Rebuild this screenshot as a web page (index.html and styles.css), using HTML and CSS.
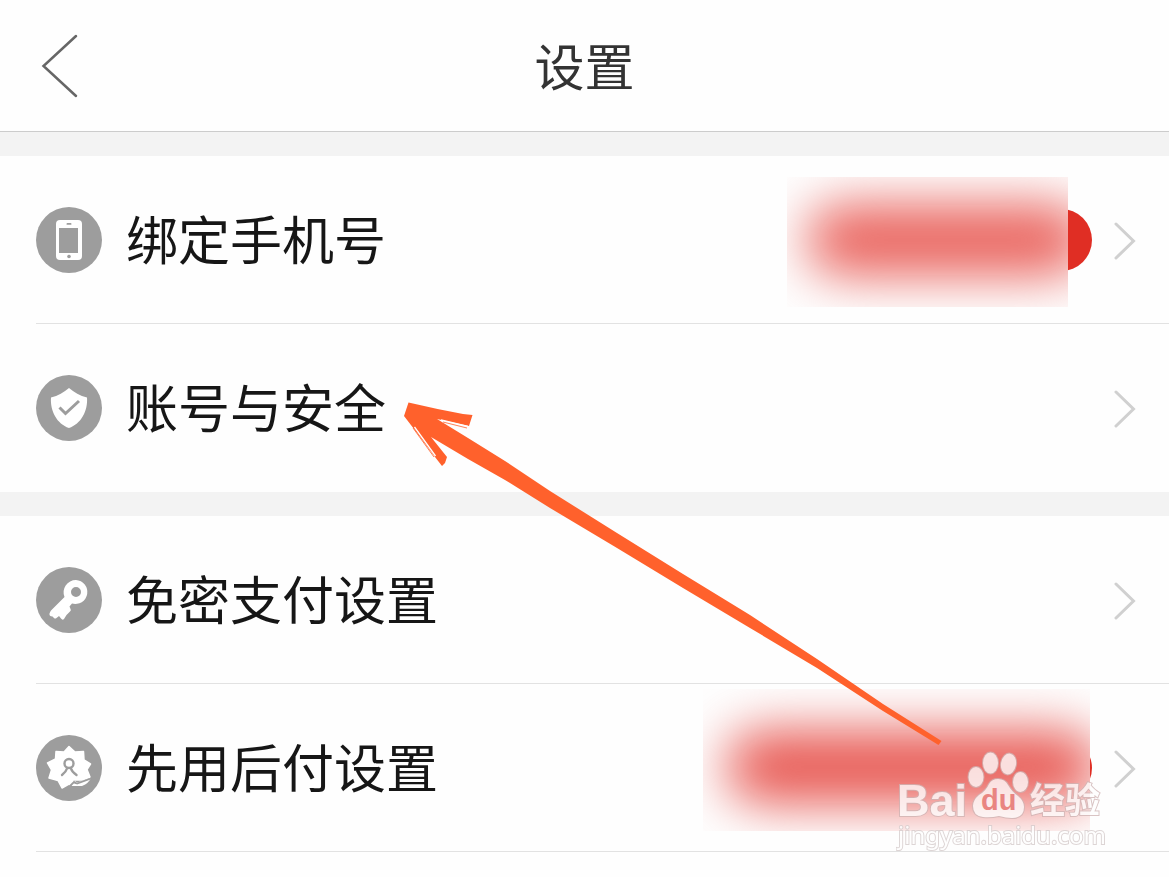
FILE: index.html
```html
<!DOCTYPE html>
<html lang="zh-CN">
<head>
    <meta charset="UTF-8">
    <meta name="viewport" content="width=device-width, initial-scale=1.0">
    <title>设置</title>
    <link rel="stylesheet" href="styles.css">
</head>
<body>
    <header class="header">
        <button class="back" aria-label="返回">
            <svg width="38" height="64" viewBox="0 0 38 64"><path d="M36 2L3.500 32L36 62" fill="none" stroke="#666" stroke-width="2.500" stroke-linecap="round"/></svg>
        </button>
        <h1 class="title">设置</h1>
    </header>

    <main>
        <nav class="group">
            <a class="row" href="#phone">
                <svg class="icon" viewBox="0 0 66 66">
                    <circle cx="33" cy="33" r="33" fill="#9d9d9d"/>
                    <rect x="20" y="13" width="26" height="40" rx="4" fill="#fff"/>
                    <rect x="23" y="21" width="19" height="25" fill="#9d9d9d"/>
                    <rect x="30.500" y="16" width="5" height="1.800" rx="0.900" fill="#9d9d9d"/>
                    <circle cx="33" cy="49.500" r="1.800" fill="#9d9d9d"/>
                </svg>
                <span class="label">绑定手机号</span>
                <span class="badge"><span class="mask"></span></span>
                <svg class="chevron" viewBox="0 0 24 40"><path d="M4 4L21.500 21L4 38"/></svg>
            </a>
            <a class="row" href="#account">
                <svg class="icon" viewBox="0 0 66 66">
                    <circle cx="33" cy="33" r="33" fill="#9d9d9d"/>
                    <path d="M33 13C38 17 44 21 51 22.500C52 36 45 49 33 53C21 49 14 36 15 22.500C22 21 28 17 33 13Z" fill="#fff"/>
                    <path d="M23.500 32.500L29.500 38.500L43 26" fill="none" stroke="#9d9d9d" stroke-width="3"/>
                </svg>
                <span class="label">账号与安全</span>
                <svg class="chevron" viewBox="0 0 24 40"><path d="M4 4L21.500 21L4 38"/></svg>
            </a>
        </nav>

        <nav class="group">
            <a class="row" href="#pay">
                <svg class="icon" viewBox="0 0 66 66">
                    <circle cx="33" cy="33" r="33" fill="#9d9d9d"/>
                    <path fill-rule="evenodd" fill="#fff" d="M40 13A12 12 0 1 1 36 36.500L33.500 39.500L34.500 42Q35.500 43 34 44.500L30.500 48L28 52Q26.500 53.500 25 51.500L23 49L20.500 51Q19 52 18 51L16.500 49.500Q13 49.500 13.500 46.500Q14 45 15 43.500L28.500 30A12.300 12.300 0 0 1 40 13ZM40 20A5 5 0 1 0 40 30A5 5 0 1 0 40 20Z"/>
                </svg>
                <span class="label">免密支付设置</span>
                <svg class="chevron" viewBox="0 0 24 40"><path d="M4 4L21.500 21L4 38"/></svg>
            </a>
            <a class="row" href="#paylater">
                <svg class="icon" viewBox="0 0 66 66">
                    <circle cx="33" cy="33" r="33" fill="#9d9d9d"/>
                    <path fill="#fff" stroke="#fff" stroke-width="1.500" stroke-linejoin="round" d="M33 11.500L39 17L47.500 16.500L48 25L54.500 29L51 34.500L54 42L46 45L37 45L35 50L33 49L26 53L22 45.500L13 43L15.500 35L11.500 28L19.500 24L20 16.500L28 17Z"/>
                    <circle cx="33" cy="28.500" r="4.500" fill="none" stroke="#9d9d9d" stroke-width="2.400"/>
                    <path d="M26 40Q30 37 31 33.500M35 33.500Q36 37 40.500 40" fill="none" stroke="#9d9d9d" stroke-width="2.400" stroke-linecap="round"/>
                    <path d="M36 47Q38 45 41 47.500L55 43Q53 48 46 51H36Z" fill="#fff"/>
                    <path d="M34 51L38 47Q39 48 41 48.500L55 43.500" fill="none" stroke="#9d9d9d" stroke-width="1.800"/>
                </svg>
                <span class="label">先用后付设置</span>
                <span class="badge badge-wide"><span class="mask"></span></span>
                <svg class="chevron" viewBox="0 0 24 40"><path d="M4 4L21.500 21L4 38"/></svg>
            </a>
        </nav>
    </main>

    <!-- pointer to the account row -->
    <svg class="arrow" viewBox="0 0 550 350">
        <path fill="#ff612c" d="M8.500 2.500Q36 9 63 14L72.500 15L69 26L37 19L68 38L105 61L150 91L217 133L283 174L350 215L417 259L483 304L541.500 341L538.500 345L483 311L417 268L350 228L283 188L217 148L150 108L105 80L68 59L31 37L47 57L45 63L42 66L35 57L14 29L4 16Z"/>
        <path d="M41 20L68 26.500M14.500 27L35.500 56" fill="none" stroke="#fff" stroke-width="1.300"/>
        <path d="M43 22L67 28M13 28L34 57" fill="none" stroke="#ff612c" stroke-width="0.800"/>
    </svg>

    <svg class="watermark" viewBox="0 0 214 104" role="img" aria-label="Baidu 经验">
        <g class="mark">
            <text class="bai" x="1" y="66">Bai</text>
            <ellipse cx="80" cy="27" rx="7.500" ry="10"/>
            <ellipse cx="94.500" cy="13" rx="7.500" ry="10.500"/>
            <ellipse cx="112.500" cy="14" rx="7.500" ry="10.500" transform="rotate(10 112.500 14)"/>
            <ellipse cx="124.500" cy="32" rx="7.500" ry="10"/>
            <path d="M102 29Q109 29 112 35Q116 42 122 46Q128 51 128 57Q128 68 116 68Q110 68 103 66Q94 68 87 67Q77 66 77 56Q77 50 83 45Q90 41 93 34Q96 29 102 29Z"/>
            <text class="jingyan" x="134" y="63">经验</text>
        </g>
        <text class="du" x="85" y="60">du</text>
        <text class="site" x="2" y="94">jingyan.baidu.com</text>
    </svg>
</body>
</html>
```

FILE: styles.css
```css
* {
    box-sizing: border-box;
}
body {
    position: relative;
    margin: 0;
    min-height: 100vh;
    overflow-x: hidden;
    background-color: #fefefe;
    color: #161616;
    font-family: "Noto Sans CJK SC", sans-serif;
}
.header {
    display: grid;
    grid-template-columns: 120px 1fr 120px;
    align-items: center;
    height: 132px;
    border-bottom: 1px solid #ccc;
}
.back {
    display: flex;
    padding: 0 0 0 40px;
    border: none;
    background: none;
    cursor: pointer;
}
.title {
    margin: 0;
    padding-bottom: 4px;
    color: #333;
    font-size: 50px;
    font-weight: 400;
    line-height: 72px;
    text-align: center;
}
.group {
    padding-left: 36px;
    border-top: 24px solid #f3f3f3;
}
.row {
    display: flex;
    align-items: center;
    height: 168px;
    padding-right: 33px;
    border-bottom: 1px solid #e2e2e2;
    color: inherit;
    text-decoration: none;
}
.group:first-child .row:last-child {
    border-bottom-color: transparent;
}
.icon {
    width: 66px;
    height: 66px;
    margin-right: 24px;
}
.label {
    flex: 1;
    padding-bottom: 4px;
    font-size: 52px;
    line-height: 72px;
}
.badge {
    position: relative;
    width: 270px;
    height: 62px;
    margin-right: 20px;
    border-radius: 31px;
    background-color: #e02e24;
}
.badge-wide {
    width: 360px;
}
.mask {
    position: absolute;
    top: -32px;
    right: 24px;
    width: 281px;
    height: 130px;
    overflow: hidden;
    background-color: #fefefe;
}
.mask::before {
    content: "";
    position: absolute;
    inset: 28px -20px 32px 20px;
    border-radius: 35px;
    background-color: #e9605a;
    filter: blur(26px);
}
.badge-wide .mask {
    top: -48px;
    right: 2px;
    width: 387px;
    height: 142px;
}
.badge-wide .mask::before {
    inset: 42px -8px 28px 24px;
    background-color: #e75650;
}
.chevron {
    width: 24px;
    height: 40px;
    fill: none;
    stroke: #d0d0d0;
    stroke-width: 3;
    stroke-linecap: round;
}
.arrow {
    position: absolute;
    top: 400px;
    left: 400px;
    width: 550px;
    height: 350px;
    pointer-events: none;
}
.watermark {
    position: absolute;
    top: 750px;
    right: 59px;
    width: 214px;
    height: 104px;
    pointer-events: none;
}
.mark {
    fill: #fff;
    stroke: #cfb4b4;
    stroke-width: 2;
    paint-order: stroke;
    opacity: 0.78;
}
.bai {
    font: bold 45px "Liberation Sans", sans-serif;
}
.jingyan {
    font: bold 35px "Noto Sans CJK SC", sans-serif;
}
.du {
    fill: #e98581;
    font: bold 29px "Liberation Sans", sans-serif;
}
.site {
    fill: #fff;
    stroke: #d6cccc;
    stroke-width: 2;
    paint-order: stroke;
    opacity: 0.8;
    font: 24px "Noto Sans", sans-serif;
}
```
